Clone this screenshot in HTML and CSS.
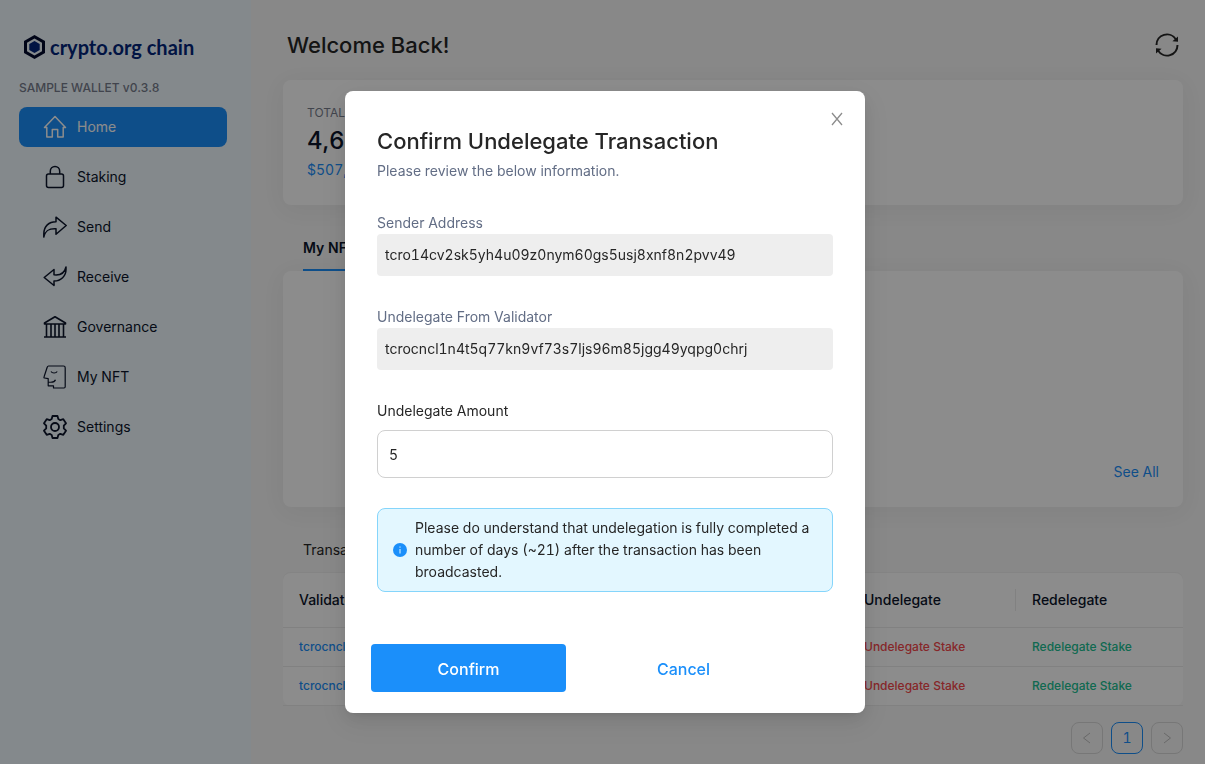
FILE: index.html
```html
<!DOCTYPE html>
<html lang="en">
<head>
<meta charset="utf-8">
<title>Crypto.org Chain Wallet</title>
<link rel="stylesheet" href="styles.css">
</head>
<body>
<div class="layout">
  <aside class="sidebar">
    <div class="logo">
      <svg width="23" height="26" viewBox="0 0 23 26"><path d="M11.500 1L22 7v12l-10.500 6L1 19V7z" fill="#020a2c"/><path d="M11.500 4.500L19 8.800v8.400l-7.500 4.300L4 17.200V8.800z" fill="#f0f9ff"/><path d="M11.500 7l5.200 3v6l-5.200 3-5.200-3v-6z" fill="#03267a"/></svg>
      <span class="logo-text">crypto.org chain</span>
    </div>
    <div class="version">SAMPLE WALLET v0.3.8</div>
    <nav class="menu">
      <a class="menu-item active" href="#"><svg class="icon" viewBox="0 0 24 24"><path d="M1.500 12.500L12 1.500l10.500 11h-2.300V22h-5.500v-7.500H9.300V22H3.800v-9.500z"/></svg>Home</a>
      <a class="menu-item" href="#"><svg class="icon" viewBox="0 0 24 24"><rect x="3.500" y="9" width="17" height="13.500" rx="2"/><path d="M7.300 9V6.200a4.700 4.700 0 0 1 9.400 0V9"/></svg>Staking</a>
      <a class="menu-item" href="#"><svg class="icon" viewBox="0 0 24 24"><path d="M.8 22V19C.8 11 6 6.800 13 6.800V2.200L23.200 10.500 13 19.200v-5.500C7 13.300 2.500 14.500.8 22z"/></svg>Send</a>
      <a class="menu-item" href="#"><svg class="icon" viewBox="0 0 24 24"><path d="M23 2v2.500C23 11 18 16 11 16v4.500L1.200 12.500 11 4.500v5.300C17 10.500 21.500 8.500 23 2z"/></svg>Receive</a>
      <a class="menu-item" href="#"><svg class="icon" viewBox="0 0 24 24"><path d="M1.500 8L12 1.800 22.500 8v1h-21zM1 22h22M3.500 9v13M8 9v13M12 9v13M16 9v13M20.500 9v13" stroke-width="1.600"/></svg>Governance</a>
      <a class="menu-item" href="#"><svg class="icon" viewBox="0 0 24 24"><path class="fine" d="M5.500 1H20.500a1.700 1.700 0 0 1 1.700 1.700v19.100a1.200 1.200 0 0 1-1.200 1.200H10.500v-2.200H5.200V13.600L1.500 13a.7.700 0 0 1-.5-1L4.200 2.200C4.500 1.400 4.900 1 5.500 1zM8 6.500c1.200 2 5 2 6.200 0M5.200 17c3.500.6 6.500 0 7.300-2.300"/></svg>My NFT</a>
      <a class="menu-item" href="#"><svg class="icon" viewBox="0 0 24 24"><path stroke-width="1.800" d="M9.500 1h5l.8 3 2 1.200 3-1L23 8.300l-2.200 2.300v2.800L23 15.700l-2.700 4.100-3-1-2 1.200-.8 3h-5l-.8-3-2-1.200-3 1L1 15.700l2.200-2.300v-2.800L1 8.300l2.700-4.100 3 1 2-1.200z"/><circle cx="12" cy="12" r="4" stroke-width="1.800"/></svg>Settings</a>
    </nav>
  </aside>
  <main class="main">
    <header class="page-head">
      <h1 class="page-title">Welcome Back!</h1>
      <button class="refresh" aria-label="Refresh"><svg width="24" height="24" viewBox="0 0 24 24"><path d="M1.500 12A10.500 10.500 0 0 1 20.800 6.200M22.500 12A10.500 10.500 0 0 1 3.200 17.800" fill="none" stroke="#262626" stroke-width="2"/><path d="M23 3.500v5.300l-5.600-.6zM1 20.500v-5.300l5.600.6z" fill="#262626"/></svg></button>
    </header>
    <section class="card balance">
      <div class="balance-label">TOTAL</div>
      <div class="balance-value">4,6</div>
      <div class="balance-fiat">$507,</div>
    </section>
    <div class="tabs"><button class="tab">My NFT</button></div>
    <section class="card gallery"><a class="link" href="#">See All</a></section>
    <h2 class="section-title">Transactions</h2>
    <table class="table">
      <thead><tr><th>Validator</th><th class="col-action"></th><th class="col-action divided">Undelegate</th><th class="col-last">Redelegate</th></tr></thead>
      <tbody>
        <tr><td><a class="link" href="#">tcrocncl</a></td><td></td><td><a class="danger" href="#">Undelegate Stake</a></td><td><a class="success" href="#">Redelegate Stake</a></td></tr>
        <tr><td><a class="link" href="#">tcrocncl</a></td><td></td><td><a class="danger" href="#">Undelegate Stake</a></td><td><a class="success" href="#">Redelegate Stake</a></td></tr>
      </tbody>
    </table>
    <div class="pagination">
      <button class="page" aria-label="Previous"><svg width="12" height="12" viewBox="0 0 12 12"><path d="M9 1L2.500 6 9 11"/></svg></button>
      <button class="page current">1</button>
      <button class="page" aria-label="Next"><svg width="12" height="12" viewBox="0 0 12 12"><path d="M3 1l6.500 5L3 11"/></svg></button>
    </div>
  </main>
</div>
<div class="overlay">
  <div class="modal" role="dialog" aria-labelledby="dialog-title">
    <button class="close" aria-label="Close"><svg width="12" height="14" viewBox="0 0 12 14"><path d="M1 1l10 12M11 1L1 13" stroke="#8c8c8c" stroke-width="1.300"/></svg></button>
    <h2 class="modal-title" id="dialog-title">Confirm Undelegate Transaction</h2>
    <p class="modal-text">Please review the below information.</p>
    <div class="field"><div class="label">Sender Address</div><div class="value">tcro14cv2sk5yh4u09z0nym60gs5usj8xnf8n2pvv49</div></div>
    <div class="field"><div class="label">Undelegate From Validator</div><div class="value">tcrocncl1n4t5q77kn9vf73s7ljs96m85jgg49yqpg0chrj</div></div>
    <div class="field"><label class="label dark" for="amount">Undelegate Amount</label><input class="input" id="amount" type="text" value="5"></div>
    <div class="alert">
      <svg class="alert-icon" width="14" height="14" viewBox="0 0 14 14"><circle cx="7" cy="7" r="7" fill="#1b8ffa"/><path d="M7 6v4.500M7 3.500v1.200" stroke="#e3f7ff"/></svg>
      <div>Please do understand that undelegation is fully completed a number of days (~21) after the transaction has been broadcasted.</div>
    </div>
    <div class="actions"><button class="btn primary">Confirm</button><button class="btn">Cancel</button></div>
  </div>
</div>
</body>
</html>
```
FILE: styles.css
```css
* { box-sizing: border-box; }
body { margin: 0; font: 400 14px/22px Inter, sans-serif; font-variant-numeric: tabular-nums; color: #262626; background: #f7f7f7; }
h1, h2, p { margin: 0; font-weight: 400; }
a { text-decoration: none; }
button { font: inherit; color: inherit; background: none; border: 0; padding: 0; cursor: pointer; }
svg { display: block; flex: none; }

.layout { display: flex; min-height: 100vh; }
.sidebar { width: 251px; flex: none; padding: 34px 24px 0 19px; background: #f0f9ff; }
.logo { display: flex; align-items: center; gap: 4px; padding-left: 4px; height: 26px; color: #03267a; }
.logo-text { font: 700 20px/24px Lato, sans-serif; }
.version { margin-top: 18px; font-size: 12px; font-weight: 500; line-height: 20px; color: #777d8c; }
.menu { display: grid; gap: 10px; margin-top: 9px; }
.menu-item { display: flex; align-items: center; gap: 10px; height: 40px; padding-left: 24px; border-radius: 8px; color: #0b142a; }
.menu-item.active { background: #1b8ffa; color: #fff; }
.icon { width: 24px; height: 24px; fill: none; stroke: currentColor; stroke-width: 1.500; stroke-linejoin: round; }
.fine { stroke-width: 1.200; }

.main { flex: 1; min-width: 0; padding: 26px 22px 10px 32px; }
.page-head { display: flex; align-items: center; justify-content: space-between; padding: 0 4px; height: 38px; }
.page-title { font-size: 22px; font-weight: 500; line-height: 38px; }
.card { background: #fff; border-radius: 8px; box-shadow: 0 4px 24px rgba(0, 0, 0, .05); }
.balance { margin-top: 16px; height: 125px; padding: 22px 24px; }
.balance-label { font-size: 12px; color: #777d8c; }
.balance-value { font-size: 24px; font-weight: 500; line-height: 34px; color: #0b142a; }
.balance-fiat { color: #1b8ffa; line-height: 24px; }
.tabs { display: flex; margin-top: 20px; padding-left: 20px; height: 46px; }
.tab { padding-top: 2px; font-weight: 600; color: #0b142a; border-bottom: 2px solid #1b8ffa; }
.gallery { display: flex; justify-content: flex-end; align-items: flex-end; height: 236px; padding: 24px; }
.link { color: #1b8ffa; }
.danger { color: #f5484c; }
.success { color: #20bf92; }
.section-title { margin-top: 32px; padding: 0 20px 11px; font-size: 14px; line-height: 22px; }
.table { width: 100%; table-layout: fixed; border-collapse: separate; border-spacing: 0; background: #fff; border-top: 1px solid #f0f0f0; border-radius: 8px; font-size: 12px; font-weight: 500; line-height: 22px; }
.table th { height: 55px; padding: 0 16px; font-size: 14px; font-weight: 500; text-align: left; color: #0b142a; border-bottom: 1px solid #ececec; }
.table td { height: 39px; padding: 0 16px; border-bottom: 1px solid #ececec; }
.col-action { width: 168px; }
.col-last { width: 167px; }
.divided { background: linear-gradient(#ececec, #ececec) right center / 1px 22px no-repeat; }
.pagination { display: flex; justify-content: flex-end; gap: 8px; margin-top: 16px; }
.page { display: grid; place-items: center; width: 32px; height: 32px; border: 1px solid #d9d9d9; border-radius: 8px; }
.page svg { fill: none; stroke: #bfbfbf; }
.current { border-color: #1b8ffa; color: #1b8ffa; }

.overlay { position: fixed; inset: 0; display: flex; justify-content: center; align-items: flex-start; padding: 91px 0 0 5px; background: rgba(0, 0, 0, .45); overflow: auto; }
.modal { position: relative; width: 520px; padding: 32px 32px 21px; background: #fff; border-radius: 8px; box-shadow: 0 3px 6px -4px rgba(0, 0, 0, .12), 0 6px 16px rgba(0, 0, 0, .08), 0 9px 28px 8px rgba(0, 0, 0, .05); }
.close { position: absolute; top: 16px; right: 16px; display: grid; place-items: center; width: 24px; height: 24px; }
.modal-title { font-size: 22px; font-weight: 500; line-height: 37px; }
.modal-text { color: #626d85; }
.field { margin-top: 30px; }
.label { display: block; color: #626d85; }
.label.dark { color: #262626; }
.value { padding: 10px 8px; background: #eee; border-radius: 4px; }
.input { display: block; width: 100%; height: 48px; margin-top: 8px; padding: 0 11px; border: 1px solid #d0d0d0; border-radius: 8px; background: #fff; color: #262626; font: inherit; }
.alert { display: flex; align-items: center; gap: 8px; margin-top: 30px; padding: 8px 15px; background: #e3f7ff; border: 1px solid #85d5fb; border-radius: 8px; }
.actions { display: flex; gap: 20px; margin: 52px 0 0 -6px; }
.btn { width: 195px; height: 48px; padding-top: 2px; border-radius: 4px; color: #1b8ffa; font-size: 16px; font-weight: 500; }
.btn.primary { background: #1b8ffa; color: #fff; }
```
